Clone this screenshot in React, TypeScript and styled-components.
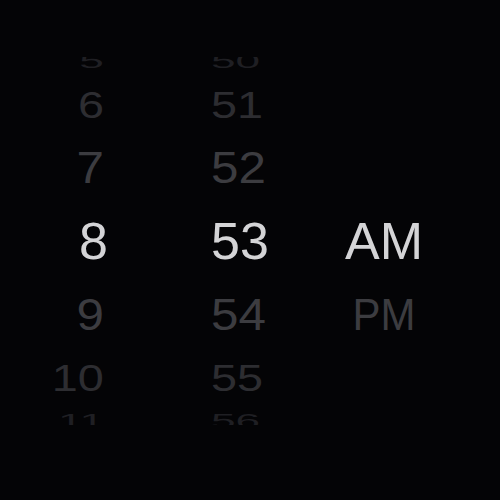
import React from "react";
import styled, {createGlobalStyle, css} from "styled-components";

const GlobalStyle = createGlobalStyle`
  html, body {
    margin: 0;
    padding: 0;
    background: #040406;
  }
`;

// row geometry of the wheel, by distance from the selected row
const ROW_HEIGHTS = [76, 71, 55, 32];
const SCALE_Y = [1, 0.85, 0.7, 0.4];
const SCALE_X = [1, 0.95, 0.9, 0.85];
const COLORS = ["#d4d4d6", "#3c3c40", "#2d2d31", "#1f1f23"];

type Align = "right" | "left" | "center";

const hours = ["5", "6", "7", "8", "9", "10", "11"];
const minutes = ["50", "51", "52", "53", "54", "55", "56"];
const periods = ["", "", "", "AM", "PM", "", ""];

type WheelProps = {
    items: string[],
    align: Align,
    lead?: number,
    shift?: number,
    squeeze?: number,
};

const Wheel = ({items, align, lead = 0, shift = 0, squeeze = 1}: WheelProps) => (
    <WheelColumn align={align} lead={lead}>
        {items.map((value, i) => {
            const d = Math.abs(i - 3);
            const dx = d > 0 ? shift : 0;
            const sx = SCALE_X[d] * (d > 0 ? squeeze : 1);
            return (
                <Row key={i} height={ROW_HEIGHTS[d]} align={align}>
                    <Label
                        align={align}
                        color={COLORS[d]}
                        style={{transform: `translateX(${dx}px) scale(${sx}, ${SCALE_Y[d]})`}}
                    >
                        {value}
                    </Label>
                </Row>
            );
        })}
    </WheelColumn>
);

export default function App() {
    return (
        <>
            <GlobalStyle/>
            <Page>
                <Picker>
                    <Wheel items={hours} align="right" shift={-4}/>
                    <Wheel items={minutes} align="left" lead={103}/>
                    <Wheel items={periods} align="center" squeeze={0.85}/>
                </Picker>
            </Page>
        </>
    );
}

const Page = styled.div`
  width: 500px;
  height: 500px;
  background: #040406;
  padding-top: 57px;
  box-sizing: border-box;
  font-family: "Liberation Sans", Arial, sans-serif;
`;

const Picker = styled.div`
  display: grid;
  grid-template-columns: 108px 226px 100px;
  height: 368px;
  overflow: hidden;
`;

const WheelColumn = styled.div<{ align: Align, lead: number }>`
  display: flex;
  flex-direction: column;
  justify-content: center;
  height: 368px;
  overflow: hidden;
  padding-left: ${({lead}) => lead}px;
  ${({align}) => align === "right" && css`align-items: flex-end;`}
  ${({align}) => align === "left" && css`align-items: flex-start;`}
  ${({align}) => align === "center" && css`align-items: center;`}
`;

const Row = styled.div<{ height: number, align: Align }>`
  flex: 0 0 auto;
  height: ${({height}) => height}px;
  display: flex;
  align-items: center;
  justify-content: ${({align}) => align === "right" ? "flex-end" : align === "left" ? "flex-start" : "center"};
`;

const Label = styled.span<{ align: Align, color: string }>`
  display: block;
  font-size: 52px;
  line-height: 52px;
  color: ${({color}) => color};
  white-space: nowrap;
  transform-origin: ${({align}) => align === "right" ? "right" : align === "left" ? "left" : "center"} center;
`;
